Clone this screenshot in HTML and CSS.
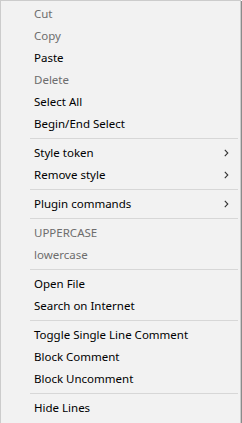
FILE: index.html
```html
<!DOCTYPE html>
<html lang="en">
<head>
    <meta charset="UTF-8">
    <title>Context menu</title>
    <link rel="stylesheet" href="styles.css">
</head>
<body>
    <div class="menu">
        <div class="item disabled">Cut</div>
        <div class="item disabled">Copy</div>
        <div class="item">Paste</div>
        <div class="item disabled">Delete</div>
        <div class="item">Select All</div>
        <div class="item">Begin/End Select</div>
        <div class="sep"></div>
        <div class="item sub">Style token
            <svg class="arrow" width="5" height="8" viewBox="0 0 5 8"><path d="M0.8 0.8 L3.8 4 L0.8 7.2" fill="none" stroke="#333" stroke-width="1.1"/></svg>
        </div>
        <div class="item sub">Remove style
            <svg class="arrow" width="5" height="8" viewBox="0 0 5 8"><path d="M0.8 0.8 L3.8 4 L0.8 7.2" fill="none" stroke="#333" stroke-width="1.1"/></svg>
        </div>
        <div class="sep"></div>
        <div class="item sub">Plugin commands
            <svg class="arrow" width="5" height="8" viewBox="0 0 5 8"><path d="M0.8 0.8 L3.8 4 L0.8 7.2" fill="none" stroke="#333" stroke-width="1.1"/></svg>
        </div>
        <div class="sep"></div>
        <div class="item disabled">UPPERCASE</div>
        <div class="item disabled">lowercase</div>
        <div class="sep"></div>
        <div class="item">Open File</div>
        <div class="item">Search on Internet</div>
        <div class="sep"></div>
        <div class="item">Toggle Single Line Comment</div>
        <div class="item">Block Comment</div>
        <div class="item">Block Uncomment</div>
        <div class="sep"></div>
        <div class="item">Hide Lines</div>
    </div>
</body>
</html>
```

FILE: styles.css
```css
body {
    margin: 0;
    font-family: 'Noto Sans', 'Open Sans', sans-serif;
    font-size: 11.5px;
    background: #fff;
}
.menu {
    width: 239px;
    height: 420px;
    box-sizing: content-box;
    background: #f2f2f2;
    border: 1px solid #cccccc;
    box-shadow: 1px 1px 0 #8a8a8a;
    padding-top: 2px;
}
.item {
    height: 22px;
    line-height: 22px;
    padding-left: 33px;
    padding-right: 11px;
    color: #000;
    display: flex;
    align-items: center;
    justify-content: space-between;
    white-space: nowrap;
}
.item.disabled {
    color: #6d6d6d;
}
.arrow {
    display: block;
}
.sep {
    height: 1px;
    margin: 3px 2px 3px 29px;
    background: #d7d7d7;
}
```
